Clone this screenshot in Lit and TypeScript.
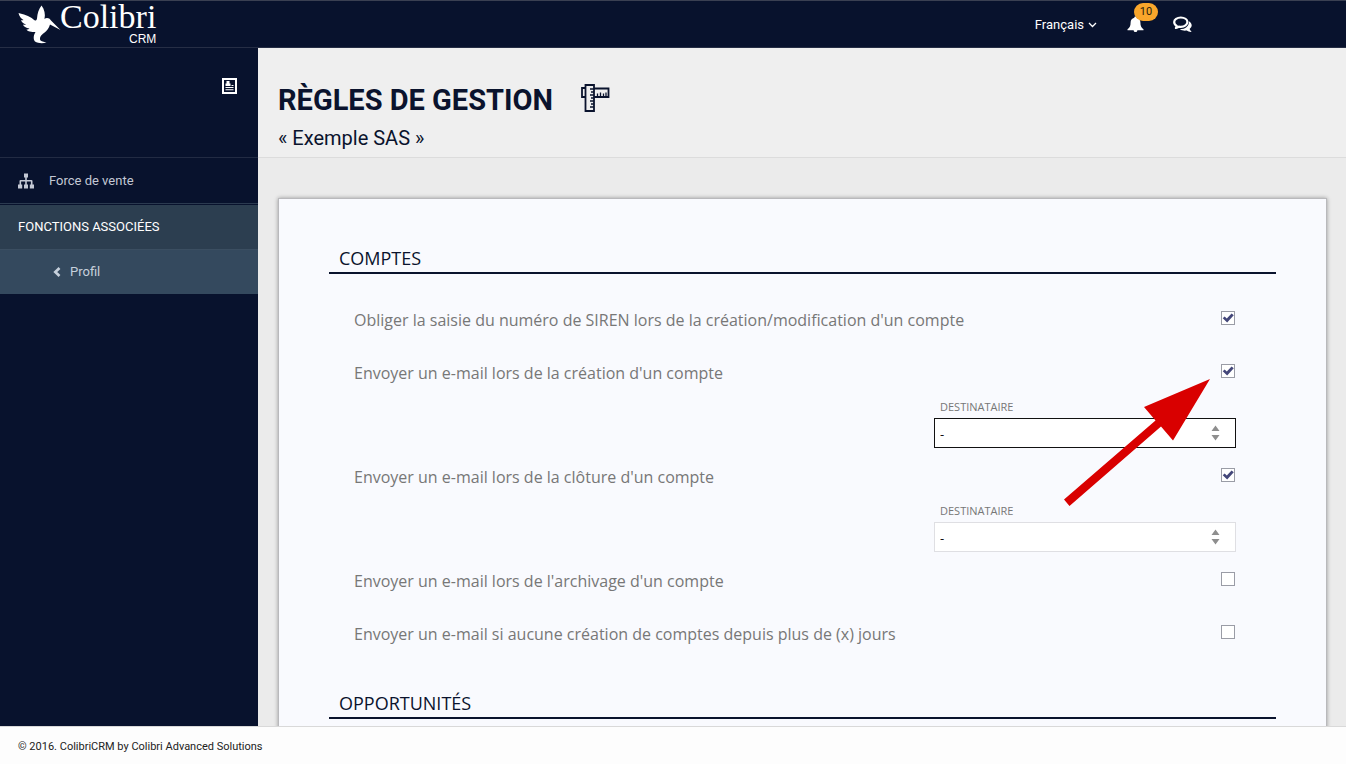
import { LitElement, html, css, svg, nothing } from "lit";
import { customElement, state } from "lit/decorators.js";
import { classMap } from "lit/directives/class-map.js";

interface Rule {
  id: string;
  label: string;
  checked: boolean;
  recipient?: boolean;
  focused?: boolean;
  pointed?: boolean;
}

const hummingbird = svg`<path fill="currentColor" d="M0.500 8C5 9 11 10.500 15.500 14.500C17 16 18.500 16 19 13.500C19.500 8 20.500 4.500 23.500 0.500C26.500 4.500 27.500 9 26.500 14C28 12.300 31.500 12.500 33 15.500L42.500 25L32 19.500C31 23 29 26 26 28C23 30 21 33 22.500 35.500C24 36.800 27 37 28.500 37.500C25 38.500 20 38.500 17 36.500C15 34 15.500 30 17.500 27C13.500 27 9.500 26.500 8.500 24.500C10 24.500 11 24 11.500 23.500C8 23 5.500 21.500 5 19.500C6.500 20 7.500 19.700 8 19.500C5.500 18.500 3.500 17 3 15C4.300 15.500 5 15.300 5.500 15C3 13.500 1.200 11.500 0.500 8Z"/>`;

@customElement("app-root")
export class AppRoot extends LitElement {
  @state() private rules: Rule[] = [
    { id: "siren", label: "Obliger la saisie du numéro de SIREN lors de la création/modification d'un compte", checked: true },
    { id: "creation", label: "Envoyer un e-mail lors de la création d'un compte", checked: true, recipient: true, focused: true, pointed: true },
    { id: "cloture", label: "Envoyer un e-mail lors de la clôture d'un compte", checked: true, recipient: true },
    { id: "archivage", label: "Envoyer un e-mail lors de l'archivage d'un compte", checked: false },
    { id: "inactivite", label: "Envoyer un e-mail si aucune création de comptes depuis plus de (x) jours", checked: false },
  ];

  static styles = css`
    :host {
      display: grid;
      grid-template-rows: auto minmax(0, 1fr) auto;
      height: 100vh;
      background: #ebebeb;
      color: #0a132d;
      font-family: Roboto, "Liberation Sans", sans-serif;
      font-size: 13px;
      line-height: 20px;
    }
    * { box-sizing: border-box; }
    a { color: inherit; text-decoration: none; }
    button { border: 0; padding: 0; background: none; color: inherit; font: inherit; cursor: pointer; }
    svg { display: block; }

    .topbar {
      display: flex;
      align-items: center;
      justify-content: space-between;
      height: 48px;
      padding: 0 154px 0 18px;
      background: #08122d;
      border-top: 1px solid #3a4052;
      border-bottom: 1px solid #262e45;
      color: #fff;
    }
    .brand { display: flex; align-items: center; }
    .wordmark { display: grid; justify-items: end; margin-left: -1px; }
    .name { font: 34px/32px "Liberation Serif", serif; }
    .crm { font: 12px/12px "Liberation Sans", sans-serif; padding-bottom: 2px; }
    .tools { display: flex; align-items: center; }
    .language { display: flex; align-items: center; gap: 4px; margin-right: 30px; padding-top: 2px; }
    .alerts { position: relative; margin-right: 29px; }
    .badge {
      position: absolute;
      left: 7px;
      top: -13px;
      min-width: 24px;
      border-radius: 9px;
      background: #f9a62b;
      color: #2b1d0c;
      font-size: 11px;
      line-height: 18px;
      text-align: center;
    }

    .body { display: grid; grid-template-columns: 258px minmax(0, 1fr); min-height: 0; }
    .sidebar { background: #08122d; color: #c3c8d4; }
    .card-link { display: flex; justify-content: flex-end; align-items: flex-start; height: 109px; padding: 30px 20px 0; color: #fff; }
    .nav { display: flex; align-items: center; gap: 15px; height: 47px; padding: 0 18px; border-top: 1px solid #222b43; border-bottom: 1px solid #2b3a50; }
    .group { margin: 0; padding: 11px 18px 12px; border-top: 1px solid #08122d; background: #2c3e50; color: #fff; font-size: 13px; line-height: 21px; font-weight: 400; }
    .sub { display: flex; align-items: center; gap: 9px; height: 45px; padding: 0 53px; background: #34495e; border-top: 1px solid #3b4e61; color: #c6d0dc; }

    .content { overflow-y: auto; scrollbar-width: none; min-height: 0; }
    .heading { height: 110px; padding: 32px 20px 0; background: #efefef; border-bottom: 1px solid #dcdcdc; }
    .title-row { display: flex; align-items: center; gap: 28px; }
    .title-row svg { margin-bottom: 4px; }
    h1 { margin: 0; font-size: 29px; line-height: 40px; font-weight: 700; }
    .company { margin: 4px 0 0; font-size: 20px; line-height: 28px; }

    .card {
      margin: 40px 19px 40px 20px;
      padding: 46px 50px;
      background: #f9fafe;
      border: 1px solid #b9b9bc;
      box-shadow: 0 0 4px rgba(0, 0, 0, 0.35);
      font-family: "Open Sans", "Noto Sans", sans-serif;
    }
    h2 { margin: 0; padding: 0 10px 1px; border-bottom: 2px solid #0a132d; font-size: 18px; line-height: 26px; font-weight: 400; }
    .rules { padding: 20px 40px 29px 25px; }
    .rule { position: relative; color: #777; }
    .line { display: flex; align-items: center; justify-content: space-between; height: 53px; padding-bottom: 2px; font-size: 16px; }
    .box {
      appearance: none;
      display: grid;
      place-items: center;
      width: 14px;
      height: 14px;
      margin: 0 1px 3px;
      border: 1px solid #9a9ca6;
      background: #fff;
    }
    .box:checked::before {
      content: "";
      width: 12px;
      height: 10px;
      background: #44477a;
      clip-path: polygon(6% 52%, 22% 36%, 40% 56%, 80% 6%, 98% 22%, 43% 94%);
    }
    .recipient { display: grid; width: 302px; margin-left: auto; padding-bottom: 3px; }
    .caption { padding: 0 6px 4px; font-size: 11px; line-height: 14px; }
    .picker { display: grid; align-items: center; }
    .picker > * { grid-area: 1 / 1; }
    select {
      appearance: none;
      width: 100%;
      height: 30px;
      padding: 2px 5px 0;
      border: 1px solid #dfdfe3;
      border-radius: 0;
      outline: 0;
      background: #fff;
      color: #111;
      font: 13px/20px "Open Sans", sans-serif;
    }
    .active select { border-color: #111; }
    .arrows { justify-self: end; margin-right: 16px; pointer-events: none; }
    .pointer { position: absolute; right: 26px; top: 32px; pointer-events: none; }

    .footer { height: 38px; padding: 10px 18px 0; background: #fdfdfd; border-top: 1px solid #d9d9d9; font-size: 11px; color: #222; }
  `;

  private toggle(id: string) {
    this.rules = this.rules.map((r) => (r.id === id ? { ...r, checked: !r.checked } : r));
  }

  private renderRule(r: Rule) {
    return html`
      <div class="rule">
        <div class="line">
          <label for=${r.id}>${r.label}</label>
          <input class="box" type="checkbox" id=${r.id} .checked=${r.checked} @change=${() => this.toggle(r.id)} />
        </div>
        ${r.recipient && r.checked
          ? html`<div class=${classMap({ recipient: true, active: !!r.focused })}>
              <label class="caption" for="dest-${r.id}">DESTINATAIRE</label>
              <div class="picker">
                <select id="dest-${r.id}"><option>-</option></select>
                <svg class="arrows" width="9" height="16" viewBox="0 0 9 16" fill="#8e8e8e"><path d="M0.500 6 4.500 0.500 8.500 6zM0.500 10H8.500L4.500 15.500z" /></svg>
              </div>
            </div>`
          : nothing}
        ${r.pointed
          ? html`<svg class="pointer" width="146" height="128" viewBox="0 0 146 128" fill="#d90000"><path d="M146 0 109 61.500 97 47.500 5.500 127 0 120.500 91.500 41.500 80 28z" /></svg>`
          : nothing}
      </div>
    `;
  }

  render() {
    return html`
      <header class="topbar">
        <a class="brand" href="#" aria-label="Colibri CRM">
          <svg width="43" height="39" viewBox="0 0 43 39">${hummingbird}</svg>
          <span class="wordmark"><span class="name">Colibri</span><span class="crm">CRM</span></span>
        </a>
        <div class="tools">
          <button class="language">
            Français
            <svg width="9" height="6" viewBox="0 0 9 6" fill="none" stroke="currentColor" stroke-width="1.300"><path d="M1 1 4.500 4.500 8 1" /></svg>
          </button>
          <button class="alerts" aria-label="Notifications">
            <svg width="17" height="17" viewBox="0 0 17 17" fill="currentColor"><path d="M8.500 0.500c.7 0 1.200.5 1.200 1.200 2.500.6 3.700 2.400 3.700 4.800 0 3.200.8 5 3.100 6.700v1H10.400a1.900 1.900 0 0 1-3.800 0H.5v-1c2.300-1.700 3.100-3.500 3.100-6.700 0-2.400 1.200-4.200 3.700-4.800 0-.7.5-1.200 1.200-1.200z" /></svg>
            <span class="badge">10</span>
          </button>
          <button aria-label="Messages">
            <svg width="19" height="17" viewBox="0 0 19 17"><path fill="currentColor" d="M15.800 5.200c1.800 1 2.900 2.400 2.900 4.100 0 1.400-.8 2.700-2.100 3.600.3 1 1 1.800 1.700 2.500.3.300.1.600-.3.600-1.700-.1-3.200-.8-4.200-1.500-2.500.4-5 0-6.900-1.300 5.500 0 9.600-3.300 8.900-8z" /><path fill="none" stroke="currentColor" stroke-width="2.200" stroke-linejoin="round" d="M7.800 1.500c3.800 0 6.600 2 6.600 4.600s-2.800 4.700-6.600 4.700c-.7 0-1.300-.1-1.900-.2-.9.700-1.900 1.200-3 1.400.5-.6.800-1.300.9-2C2.100 9.100 1.200 7.700 1.200 6.100c0-2.600 2.800-4.600 6.600-4.600z" /></svg>
          </button>
        </div>
      </header>

      <div class="body">
        <nav class="sidebar">
          <div class="card-link">
            <a href="#" aria-label="Fiche">
              <svg width="17" height="17" viewBox="0 0 17 17" fill="currentColor"><path fill-rule="evenodd" d="M1 0H16V16H1zM3 2V14H14V2z" /><path d="M5.500 3H8.500V5.500H9.500V8H4.500V5.500H5.500zM4.500 9H12.500V10H4.500zM4.500 11.200H12.500V12.200H4.500zM10.500 7H12.500V8H10.500z" /></svg>
            </a>
          </div>
          <a class="nav" href="#">
            <svg width="16" height="16" viewBox="0 0 16 16" fill="currentColor"><path d="M6 0.500H10V4.500H8.800V7H13.500Q14.500 7 14.500 8V11.500H16V15.500H11.800V11.500H12.900V8.500H8.800V11.500H10V15.500H6V11.500H7.200V8.500H3.100V11.500H4.200V15.500H0V11.500H1.500V8Q1.500 7 2.500 7H7.200V4.500H6z" /></svg>
            Force de vente
          </a>
          <h3 class="group">FONCTIONS ASSOCIÉES</h3>
          <a class="sub" href="#">
            <svg width="8" height="10" viewBox="0 0 8 10" fill="none" stroke="currentColor" stroke-width="2.700"><path d="M6.500 1 2.300 5 6.500 9" /></svg>
            Profil
          </a>
        </nav>

        <main class="content">
          <div class="heading">
            <div class="title-row">
              <h1>RÈGLES DE GESTION</h1>
              <svg width="29" height="28" viewBox="0 0 29 28" fill="none" stroke="#0a132d" stroke-width="1.800"><path d="M4.500 1H13V27H4.500zM4.500 4H1V13H4.500M13 4.500H27.500V13H13" /><path stroke-width="1.300" d="M9 5H13M10 8H13M9 11H13M10 14H13M9 17H13M10 20H13M9 23H13M16.500 13V9.500M19.500 13V8.500M22.500 13V9.500M25 13V8.500" /></svg>
            </div>
            <p class="company">« Exemple SAS »</p>
          </div>
          <section class="card">
            <h2>COMPTES</h2>
            <div class="rules">${this.rules.map((r) => this.renderRule(r))}</div>
            <h2>OPPORTUNITÉS</h2>
          </section>
        </main>
      </div>

      <footer class="footer">© 2016. ColibriCRM by Colibri Advanced Solutions</footer>
    `;
  }
}
